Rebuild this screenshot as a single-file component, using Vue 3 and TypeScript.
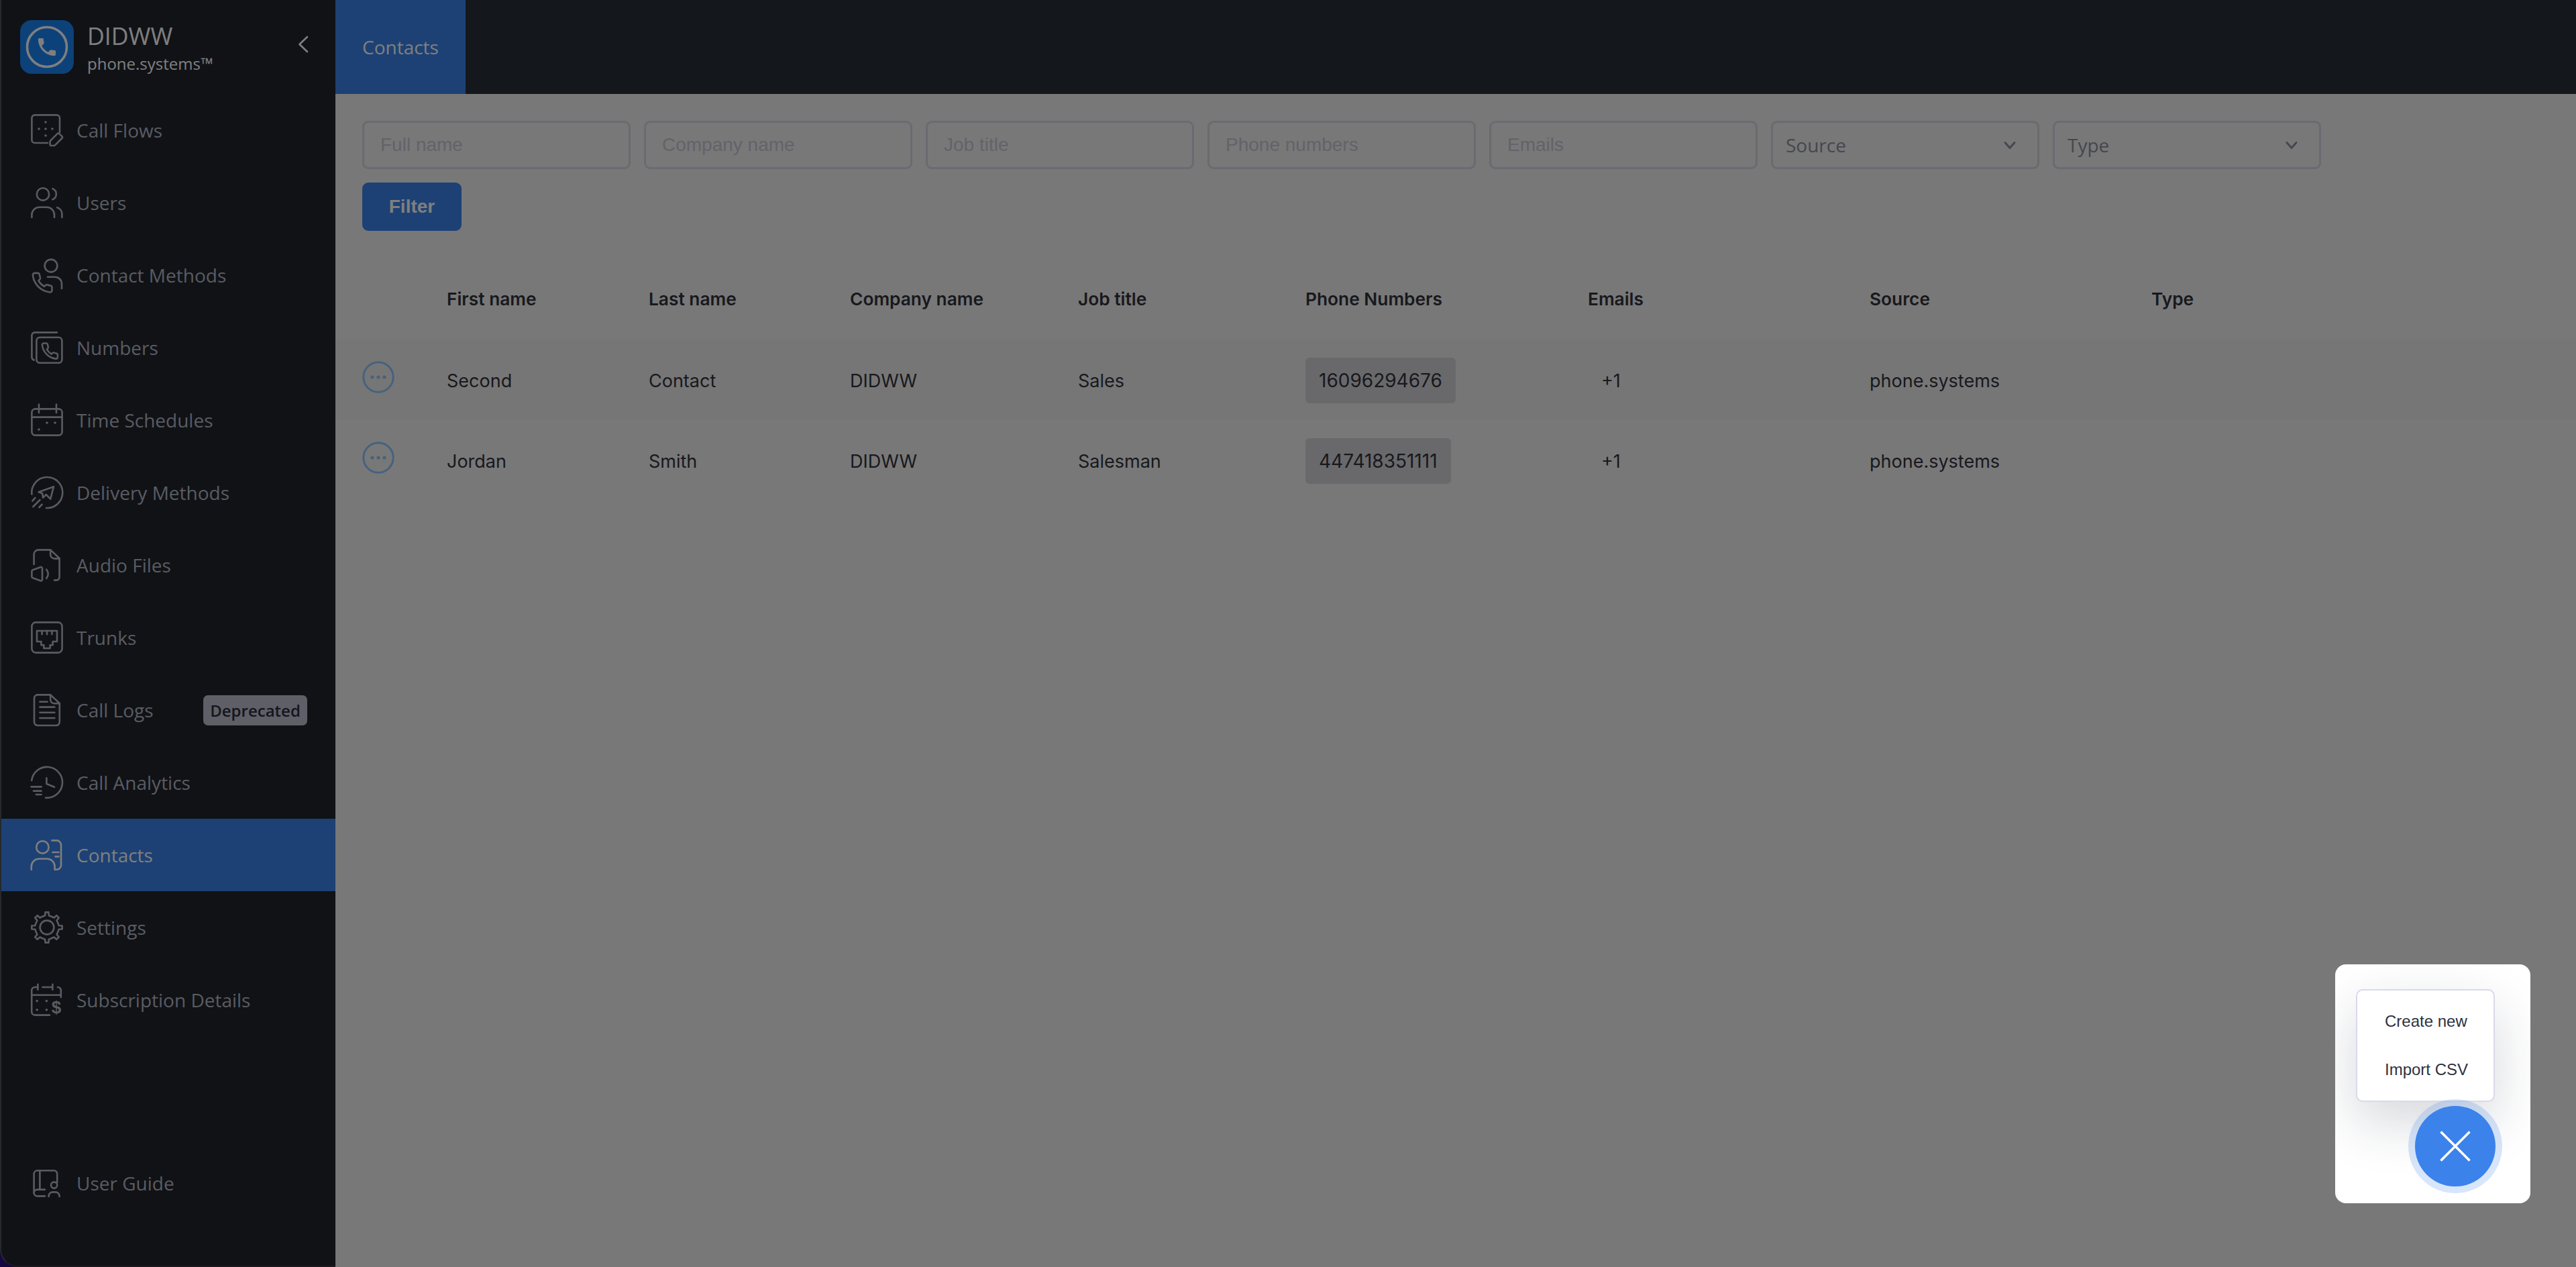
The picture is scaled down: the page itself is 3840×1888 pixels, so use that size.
<script setup lang="ts">
interface NavItem {
  label: string
  icon: string
  active?: boolean
  badge?: string
}

const phone =
  'M22 16.92v3a2 2 0 0 1-2.18 2 19.79 19.79 0 0 1-8.63-3.07 19.5 19.5 0 0 1-6-6 19.79 19.79 0 0 1-3.07-8.67A2 2 0 0 1 4.11 2h3a2 2 0 0 1 2 1.72 12.84 12.84 0 0 0 .7 2.81 2 2 0 0 1-.45 2.11L8.09 9.91a16 16 0 0 0 6 6l1.27-1.27a2 2 0 0 1 2.11-.45 12.84 12.84 0 0 0 2.81.7A2 2 0 0 1 22 16.92z'

function gearPath(): string {
  const cx = 12
  const cy = 12
  const pts: string[] = []
  const teeth = 8
  for (let i = 0; i < teeth; i++) {
    const a = (i * Math.PI * 2) / teeth - Math.PI / 2
    const step = (Math.PI * 2) / teeth
    const list: [number, number][] = [
      [a - step * 0.5, 8.8],
      [a - step * 0.2, 9],
      [a - step * 0.14, 11.4],
      [a + step * 0.14, 11.4],
      [a + step * 0.2, 9],
    ]
    for (const [t, r] of list) {
      pts.push(`${(cx + Math.cos(t) * r).toFixed(2)} ${(cy + Math.sin(t) * r).toFixed(2)}`)
    }
  }
  return 'M' + pts.join('L') + 'Z'
}

const dot = (x: number, y: number) => `<circle cx="${x}" cy="${y}" r=".9" fill="currentColor" stroke="none"/>`

const nav: NavItem[] = [
  {
    label: 'Call Flows',
    icon: `<path d="M12.5 21.5H3A2.3 2.3 0 0 1 .7 19.2V3A2.3 2.3 0 0 1 3 .7h16.2A2.3 2.3 0 0 1 21.5 3v10.5"/><path d="M14.6 19.8l5.2-5.2a1 1 0 0 1 1.4 0l2 2a1 1 0 0 1 0 1.4l-5.2 5.2a1 1 0 0 1-.7.3h-2.2a.8.8 0 0 1-.8-.8v-2.2a1 1 0 0 1 .3-.7z"/>${dot(11, 6)}${dot(6, 11)}${dot(11, 11)}${dot(16, 11)}${dot(11, 16)}`,
  },
  {
    label: 'Users',
    icon: `<circle cx="9" cy="5.7" r="4.6"/><path d="M16.2 1.6a4.3 4.3 0 0 1 0 8"/><path d="M.7 23v-2a5.6 5.6 0 0 1 5.6-5.6h5.6a5.6 5.6 0 0 1 5.6 5.6v2"/><path d="M19.6 15.6c2.1.6 3.6 2.5 3.6 4.7V23"/>`,
  },
  {
    label: 'Contact Methods',
    icon: `<circle cx="15" cy="5" r="4.7"/><path d="M12.5 13.4H18a5 5 0 0 1 5 5V22"/><g transform="translate(-.1 9) scale(.72)" stroke-width="1.8"><path d="${phone}"/></g>`,
  },
  {
    label: 'Numbers',
    icon: `<path d="M19.5 .7H3A2.3 2.3 0 0 0 .7 3v16a2.4 2.4 0 0 0 1.7 2.3"/><rect x="4.2" y="4.4" width="19" height="19" rx="2.5"/><g transform="translate(7.2 7.6) scale(.58)" stroke-width="2.2"><path d="${phone}"/></g>`,
  },
  {
    label: 'Time Schedules',
    icon: `<rect x=".7" y="3.7" width="22.6" height="19.6" rx="2.5"/><path d="M.7 9.8h22.6M6 .3v6.2M19 .3v6.2"/>${dot(12, 14)}${dot(18, 14)}${dot(6, 19)}`,
  },
  {
    label: 'Delivery Methods',
    icon: `<path d="M.7 13.2A11.5 11.5 0 1 1 11.5 23.5"/><path d="M5.8 11.6L17 7.6l-2.4 9.2-3.2-3.3-2.4 2.3-.4-3.2z"/><path d="M1.2 18.2l2-2.3M1.7 22.5l5-5M6.2 23l2.1-2.2"/>`,
  },
  {
    label: 'Audio Files',
    icon: `<path d="M2.3 11.5V4A3.3 3.3 0 0 1 5.6.7h9L21.3 7v14a2.3 2.3 0 0 1-2.3 2.3h-1.5"/><path d="M14.6.7v3.5a3 3 0 0 0 3 3h3.7"/><path d="M.7 16.5a1 1 0 0 1 .8-.9l5.5-2a1 1 0 0 1 1.5 1v8a1 1 0 0 1-1.5 1l-5.5-2a1 1 0 0 1-.8-.9z"/><path d="M11.6 15.3c1.7 2 1.7 4.7 0 6.6"/>`,
  },
  {
    label: 'Trunks',
    icon: `<rect x=".7" y=".7" width="22.6" height="22.6" rx="3"/><path d="M4.5 7h15v8h-3.2v2.6h-2v2.4H9.7v-2.4h-2V15H4.5z"/><path d="M8.3 7v2.6M12 7v2.6M15.7 7v2.6"/>`,
  },
  {
    label: 'Call Logs',
    badge: 'Deprecated',
    icon: `<path d="M5 .7h9.6L21.4 7v14a2.5 2.5 0 0 1-2.5 2.5H5A2.5 2.5 0 0 1 2.5 21V3.2A2.5 2.5 0 0 1 5 .7z"/><path d="M14.6.7v3.6a2.8 2.8 0 0 0 2.8 2.8h4"/><path d="M6.7 5.9h5.6M6.7 9.8h11M6.7 13.9h11M6.7 18h11"/>`,
  },
  {
    label: 'Call Analytics',
    icon: `<path d="M.6 10.5A11.5 11.5 0 1 1 11 23.4"/><path d="M11.7 8.6V13l5.8 2.4"/><path d="M.3 15.2h7.5M2 18.3h5.8M3.9 21h3.9"/>`,
  },
  {
    label: 'Contacts',
    active: true,
    icon: `<circle cx="8.7" cy="6.2" r="4.6"/><path d="M.4 23v-2.4a5.7 5.7 0 0 1 5.7-5.7h6a5.7 5.7 0 0 1 5.7 5.7V23"/><path d="M15.7 1.2h3.5a3.3 3.3 0 0 1 3.3 3.3v15.2a3.2 3.2 0 0 1-3.2 3.2h-1"/><path d="M16.2 10h4.5M18.3 13.2h2.4"/>`,
  },
  {
    label: 'Settings',
    icon: `<path d="${gearPath()}"/><circle cx="12" cy="12" r="5.2"/>`,
  },
  {
    label: 'Subscription Details',
    icon: `<path d="M5 2.5H3A2.4 2.4 0 0 0 .6 4.9v16a2.4 2.4 0 0 0 2.4 2.4h11M8.7 2.5h7.5M20 2.5a2.3 2.3 0 0 1 2.4 2.4V10M.6 8.4h21.8M5.2.4V4.4M16.2.4V4.4"/>${dot(4.6, 12.8)}${dot(11.7, 12.8)}${dot(4.6, 19.4)}${dot(11.7, 19.4)}<text x="19" y="22" text-anchor="middle" font-family="Liberation Sans" font-weight="700" font-size="13" fill="currentColor" stroke="none">$</text>`,
  },
]

const guideIcon = `<path d="M19.6 11.5V5a2.4 2.4 0 0 0-2.4-2.4H4.8A2.5 2.5 0 0 0 2.3 5v14.2"/><path d="M6.7 2.6V16.8M2.3 19.3a2.5 2.5 0 0 1 2.5-2.5H10.5M4.8 21.7h5.7M2.3 19.3a2.5 2.5 0 0 0 2.5 2.4"/><circle cx="17.3" cy="13.5" r="2.3"/><path d="M13.3 22v-.3a3 3 0 0 1 3-3h2a3 3 0 0 1 3 3v.3"/>`

const filters = ['Full name', 'Company name', 'Job title', 'Phone numbers', 'Emails']
const selects = ['Source', 'Type']
const columns = ['First name', 'Last name', 'Company name', 'Job title', 'Phone Numbers', 'Emails', 'Source', 'Type']

interface Contact {
  first: string
  last: string
  company: string
  job: string
  phone: string
  emails: string
  source: string
}

const contacts: Contact[] = [
  { first: 'Second', last: 'Contact', company: 'DIDWW', job: 'Sales', phone: '16096294676', emails: '+1', source: 'phone.systems' },
  { first: 'Jordan', last: 'Smith', company: 'DIDWW', job: 'Salesman', phone: '447418351111', emails: '+1', source: 'phone.systems' },
]
</script>

<template>
  <div class="app">
    <aside class="sidebar">
      <div class="brand">
        <svg class="logo" viewBox="0 0 80 80">
          <rect width="80" height="80" rx="17" fill="#1884f2" />
          <circle cx="40" cy="40" r="29.5" fill="none" stroke="#fff" stroke-width="3.6" />
          <path
            transform="translate(22.6 22.6) scale(1.45)"
            fill="#fff"
            d="M6.62 10.79c1.44 2.83 3.76 5.14 6.59 6.59l2.2-2.2c.27-.27.67-.36 1.02-.24 1.12.37 2.33.57 3.57.57.55 0 1 .45 1 1V20c0 .55-.45 1-1 1-9.39 0-17-7.61-17-17 0-.55.45-1 1-1h3.5c.55 0 1 .45 1 1 0 1.25.2 2.45.57 3.57.11.35.03.74-.25 1.02l-2.2 2.2z"
          />
        </svg>
        <div class="brand-text">
          <div class="brand-name">DIDWW</div>
          <div class="brand-sub">phone.systems™</div>
        </div>
        <svg class="collapse" viewBox="0 0 16 26" fill="none" stroke="#fff" stroke-width="2.6" stroke-linecap="round" stroke-linejoin="round">
          <path d="M14 2L2.5 13 14 24" />
        </svg>
      </div>
      <nav class="nav">
        <a v-for="item in nav" :key="item.label" class="nav-item" :class="{ active: item.active }">
          <svg class="nav-icon" viewBox="0 0 24 24" fill="none" stroke="currentColor" stroke-width="1.3" stroke-linecap="round" stroke-linejoin="round" v-html="item.icon"></svg>
          <span class="nav-label">{{ item.label }}</span>
          <span v-if="item.badge" class="badge">{{ item.badge }}</span>
        </a>
      </nav>
      <a class="nav-item guide">
        <svg class="nav-icon" viewBox="0 0 24 24" fill="none" stroke="currentColor" stroke-width="1.3" stroke-linecap="round" stroke-linejoin="round" v-html="guideIcon"></svg>
        <span class="nav-label">User Guide</span>
      </a>
    </aside>

    <main class="main">
      <header class="topbar">
        <div class="tab">Contacts</div>
      </header>
      <section class="content">
        <form class="filters" @submit.prevent>
          <div class="filter-row">
            <input v-for="f in filters" :key="f" class="field" type="text" :placeholder="f" />
            <div v-for="s in selects" :key="s" class="field select">
              <span>{{ s }}</span>
              <svg class="caret" viewBox="0 0 20 20" fill="none" stroke="#8c8e9e" stroke-width="3" stroke-linecap="round" stroke-linejoin="round">
                <path d="M3 6.5l7 8 7-8" />
              </svg>
            </div>
          </div>
          <button class="filter-btn" type="submit">Filter</button>
        </form>

        <div class="table">
          <div class="row head">
            <div></div>
            <div v-for="c in columns" :key="c">{{ c }}</div>
          </div>
          <div v-for="(c, i) in contacts" :key="c.first" class="row body" :class="{ shaded: i === 0 }">
            <div class="actions">
              <svg viewBox="0 0 48 48" class="more">
                <circle cx="24" cy="24" r="22.2" fill="none" stroke="#8cc4ff" stroke-width="3" />
                <circle cx="15" cy="24" r="2.6" fill="#8cc4ff" />
                <circle cx="24" cy="24" r="2.6" fill="#8cc4ff" />
                <circle cx="33" cy="24" r="2.6" fill="#8cc4ff" />
              </svg>
            </div>
            <div>{{ c.first }}</div>
            <div>{{ c.last }}</div>
            <div>{{ c.company }}</div>
            <div>{{ c.job }}</div>
            <div><span class="chip">{{ c.phone }}</span></div>
            <div><span class="more-count">{{ c.emails }}</span></div>
            <div>{{ c.source }}</div>
            <div></div>
          </div>
        </div>
      </section>
    </main>

    <div class="overlay"></div>

    <div class="fab-card">
      <div class="fab-menu">
        <div class="fab-option">Create new</div>
        <div class="fab-option">Import CSV</div>
      </div>
      <button class="fab" type="button" aria-label="Close">
        <svg viewBox="0 0 46 46" fill="none" stroke="#fff" stroke-width="3.6">
          <path d="M1.5 1.5l43 43M44.5 1.5l-43 43" />
        </svg>
      </button>
    </div>
  </div>
</template>

<style>
html,
body {
  margin: 0;
  background: #2a0e80;
}
</style>

<style scoped>
.app {
  display: flex;
  height: 100vh;
  min-height: 1888px;
  overflow: hidden;
  position: relative;
  font-family: Inter, "Liberation Sans", sans-serif;
}

.sidebar {
  width: 500px;
  flex: none;
  box-sizing: border-box;
  display: flex;
  flex-direction: column;
  background: #20242c;
  border-left: 2px solid #4c5058;
  border-bottom: 2px solid #363940;
  border-bottom-left-radius: 26px;
  font-family: "Open Sans", sans-serif;
  color: #b4b7c4;
}

.brand {
  height: 140px;
  box-sizing: border-box;
  padding-left: 28px;
  display: flex;
  align-items: center;
  color: #fff;
}

.logo {
  width: 80px;
  height: 80px;
  flex: none;
}

.brand-text {
  margin-left: 20px;
  width: 312px;
  flex: none;
}

.brand-name {
  font-size: 35.6px;
  line-height: 50px;
}

.brand-sub {
  font-size: 24px;
  line-height: 34px;
}

.collapse {
  width: 16px;
  height: 26px;
  flex: none;
  margin-left: 2px;
  margin-top: -8px;
}

.nav {
  flex: 1;
}

.nav-item {
  height: 108px;
  box-sizing: border-box;
  padding-left: 44px;
  display: flex;
  align-items: center;
}

.nav-item.active {
  background: #3a82e8;
  color: #fff;
}

.guide {
  margin-bottom: 69px;
}

.nav-icon {
  width: 48px;
  height: 48px;
  flex: none;
  overflow: visible;
}

.nav-label {
  margin-left: 20px;
  font-size: 28px;
  line-height: 38px;
}

.badge {
  position: absolute;
  left: 303px;
  width: 155px;
  height: 45px;
  box-sizing: border-box;
  border-radius: 7px;
  background: #bcbecf;
  color: #2a2c36;
  font-size: 24px;
  font-weight: 600;
  line-height: 45px;
  text-align: center;
}

.main {
  flex: 1;
  min-width: 0;
  display: flex;
  flex-direction: column;
  background: #f0f0f0;
}

.topbar {
  height: 140px;
  flex: none;
  display: flex;
  background: #282e38;
}

.tab {
  width: 194px;
  box-sizing: border-box;
  padding-left: 40px;
  background: #3a82e8;
  color: #fff;
  font-family: "Open Sans", sans-serif;
  font-size: 28px;
  line-height: 140px;
}

.content {
  padding-top: 40px;
}

.filters {
  padding-left: 40px;
  display: flex;
  flex-direction: column;
  align-items: flex-start;
  gap: 20px;
}

.filter-row {
  display: flex;
  gap: 20px;
}

.field {
  width: 400px;
  height: 72px;
  box-sizing: border-box;
  border: 3px solid #d4d4e2;
  border-radius: 9px;
  background: transparent;
  padding: 0 24px;
  font-family: "Liberation Sans", Arial, sans-serif;
  font-size: 28px;
  outline: none;
  margin: 0;
}

.field::placeholder {
  color: #c6c6d2;
  opacity: 1;
}

.select {
  display: flex;
  align-items: center;
  justify-content: space-between;
  padding: 0 31px 0 19px;
  font-family: "Open Sans", sans-serif;
  color: #8c8e9e;
}

.caret {
  width: 20px;
  height: 20px;
}

.filter-btn {
  width: 148px;
  height: 72px;
  padding: 0;
  border: 0;
  border-radius: 9px;
  background: #3a82e8;
  color: #fff;
  font-family: "Liberation Sans", Arial, sans-serif;
  font-size: 28px;
  font-weight: 700;
}

.table {
  margin-top: 40px;
}

.row {
  display: grid;
  grid-template-columns: 166px 301px 300px 340px 339px 421px 420px 420px 1fr;
  align-items: center;
  color: #30333c;
  font-size: 27px;
}

.row.head {
  height: 122px;
  font-size: 26.3px;
  font-weight: 600;
}

.row.body {
  height: 120px;
  box-sizing: border-box;
  padding-top: 2px;
}

.row.shaded {
  background: #ededed;
}

.actions {
  padding-left: 40px;
  height: 48px;
  margin-bottom: 10px;
}

.more {
  display: block;
  width: 48px;
  height: 48px;
}

.chip {
  display: inline-block;
  padding: 0 20px;
  height: 68px;
  line-height: 68px;
  border-radius: 6px;
  background: #d2d2d6;
  font-size: 28px;
}

.more-count {
  padding-left: 20px;
}

.overlay {
  position: absolute;
  inset: 0;
  background: rgba(0, 0, 0, 0.5);
  z-index: 10;
}

.fab-card {
  position: absolute;
  left: 3481px;
  top: 1437px;
  width: 291px;
  height: 356px;
  border-radius: 16px;
  background: #fff;
  overflow: hidden;
  z-index: 20;
}

.fab-menu {
  position: absolute;
  left: 31px;
  top: 37px;
  width: 207px;
  height: 168px;
  box-sizing: border-box;
  border: 2px solid #d9d9e9;
  border-radius: 10px;
  background: #fff;
  padding-left: 41px;
  box-shadow: 0 30px 80px rgba(30, 40, 60, 0.18);
  color: #2d3340;
  font-family: "Liberation Sans", Arial, sans-serif;
  font-size: 24px;
}

.fab-option {
  height: 72px;
  line-height: 72px;
  white-space: nowrap;
}

.fab-option:first-child {
  margin-top: 10px;
}

.fab {
  position: absolute;
  left: 119px;
  top: 211px;
  width: 120px;
  height: 120px;
  padding: 0;
  border: 0;
  border-radius: 50%;
  background: #3b82eb;
  box-shadow: 0 0 0 10px rgba(59, 130, 235, 0.2);
  display: flex;
  align-items: center;
  justify-content: center;
}

.fab svg {
  width: 46px;
  height: 46px;
}
</style>
